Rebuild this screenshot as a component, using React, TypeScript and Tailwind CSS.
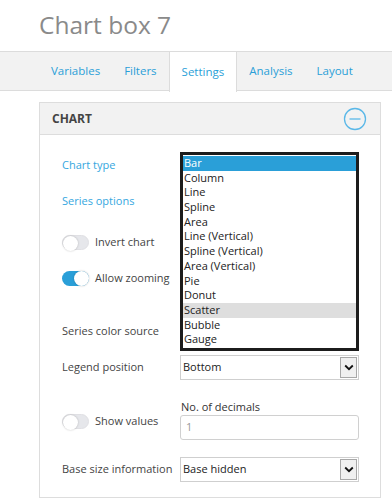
import React from "react";

const font = { fontFamily: '"Open Sans", "Liberation Sans", sans-serif' };

function Toggle({ on }: { on: boolean }) {
  return (
    <div
      className={
        "relative w-[27px] h-[15px] rounded-full shrink-0 " +
        (on ? "bg-[#2a9fd8]" : "bg-[#e6e7eb] border border-[#e0e0e4]")
      }
    >
      <div
        className={
          "absolute top-[0px] w-[15px] h-[15px] rounded-full bg-white shadow-[0_0_2px_rgba(0,0,0,0.25)] " +
          (on ? "right-0" : "left-0 top-[-1px]")
        }
      />
    </div>
  );
}

function Select({ value }: { value: string }) {
  return (
    <div className="relative w-[179px] h-[25px] border border-[#cfcfcf] bg-white flex items-center">
      <span className="pl-[2px] text-[11px] text-[#222]">{value}</span>
      <div className="absolute right-[1px] top-[1px] bottom-[1px] w-[17px] border border-[#a8a8a8] bg-[#f0f0f0] flex items-center justify-center">
        <svg width="10" height="7" viewBox="0 0 10 7">
          <path d="M1.2 1.5 L5 5.2 L8.8 1.5" fill="none" stroke="#111" strokeWidth="1.8" />
        </svg>
      </div>
    </div>
  );
}

const options = [
  "Bar",
  "Column",
  "Line",
  "Spline",
  "Area",
  "Line (Vertical)",
  "Spline (Vertical)",
  "Area (Vertical)",
  "Pie",
  "Donut",
  "Scatter",
  "Bubble",
  "Gauge",
];

export default function App() {
  return (
    <div className="w-[392px] h-[504px] bg-white overflow-hidden relative" style={font}>
      <div className="h-[51px] pl-[39px] pt-[10px] text-[24.5px] leading-[30px] text-[#8a8a8a]">
        Chart box 7
      </div>
      <div className="h-[40px] border-t border-b border-[#dcdcdc] bg-[#f2f2f2] flex pl-[39px]">
        {["Variables", "Filters", "Settings", "Analysis", "Layout"].map((t) => (
          <div
            key={t}
            className={
              "px-[12px] flex items-center text-[11.5px] text-[#2a9fd8] " +
              (t === "Settings"
                ? "bg-white border-l border-r border-[#dcdcdc] px-[11px] mb-[-1px] h-[40px]"
                : "")
            }
          >
            {t}
          </div>
        ))}
      </div>

      <div className="ml-[39px] mt-[11px] w-[342px] h-[396px] border border-[#dddddd] relative">
        <div className="h-[32px] bg-[#f2f2f2] border-b border-[#dddddd] flex items-center justify-between pl-[12px] pr-[13px]">
          <span className="text-[12px] font-bold text-[#444]">CHART</span>
          <svg width="24" height="24" viewBox="0 0 24 24">
            <circle cx="12" cy="12" r="10.5" fill="none" stroke="#5ab8e8" strokeWidth="1.3" />
            <line x1="6.5" y1="12" x2="17.5" y2="12" stroke="#5ab8e8" strokeWidth="1.3" />
          </svg>
        </div>

        <div className="pl-[22px] pt-[17px] text-[11px] text-[#444]">
          <div className="flex items-center h-[26px] relative">
            <div className="w-[118px] text-[#35a7e0]">Chart type</div>
            <div className="absolute left-[118px] top-0 w-[179px] h-[199px] border-[3px] border-[#1c1c1c] bg-white pt-[1px] z-10">
              {options.map((o) => (
                <div
                  key={o}
                  className={
                    "h-[14.7px] leading-[14.7px] pl-[1px] text-[11px] " +
                    (o === "Bar"
                      ? "bg-[#2a9fd8] text-white"
                      : o === "Scatter"
                      ? "bg-[#dedede] text-[#222]"
                      : "text-[#222]")
                  }
                >
                  {o}
                </div>
              ))}
            </div>
          </div>

          <div className="flex items-center h-[26px] mt-[10px]">
            <div className="w-[118px] text-[#35a7e0]">Series options</div>
          </div>

          <div className="flex items-center h-[26px] mt-[15px] gap-[6px]">
            <Toggle on={false} />
            <span>Invert chart</span>
          </div>

          <div className="flex items-center h-[26px] mt-[10px] gap-[6px]">
            <Toggle on={true} />
            <span>Allow zooming</span>
          </div>

          <div className="flex items-center h-[26px] mt-[27px]">
            <div className="w-[118px]">Series color source</div>
          </div>

          <div className="flex items-center h-[26px] mt-[10px]">
            <div className="w-[118px]">Legend position</div>
            <Select value="Bottom" />
          </div>

          <div className="flex items-end mt-[20px]">
            <div className="w-[118px] h-[26px] flex items-center gap-[6px] mb-[6px]">
              <Toggle on={false} />
              <span>Show values</span>
            </div>
            <div className="flex flex-col">
              <div className="h-[14px] leading-[14px] pl-[1px] text-[#333] mb-[1px]">No. of decimals</div>
              <div className="w-[179px] h-[25px] border border-[#d0d0d0] rounded-[3px] flex items-center pl-[5px] text-[#999]">
                1
              </div>
            </div>
          </div>

          <div className="flex items-center h-[26px] mt-[16px]">
            <div className="w-[118px]">Base size information</div>
            <Select value="Base hidden" />
          </div>
        </div>
      </div>
    </div>
  );
}
